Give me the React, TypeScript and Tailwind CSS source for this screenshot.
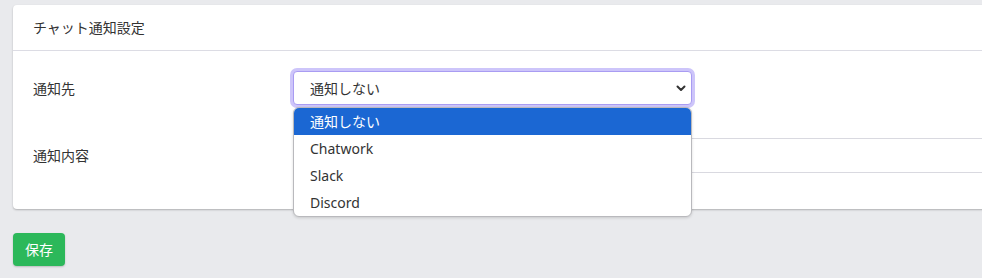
import React from "react";

export default function App() {
  const options = ["通知しない", "Chatwork", "Slack", "Discord"];
  return (
    <div
      className="w-full h-[278px] overflow-hidden bg-[#e9eaed] pl-[13px] pt-[5px] text-[14px] text-[#333333]"
      style={{ fontFamily: '"Noto Sans", "Noto Sans CJK JP", sans-serif' }}
    >
      <div className="w-[1100px] bg-white rounded-[4px] shadow-[0_1px_2px_rgba(0,0,0,0.25)]">
        <div className="h-[46px] flex items-center px-5 border-b border-[#dcdce4]">
          チャット通知設定
        </div>
        <div className="px-5 pt-[20px] pb-[36px]">
          <div className="flex items-center">
            <div className="w-[260px]">通知先</div>
            <div className="relative w-[399px]">
              <div className="h-[34px] flex items-center justify-between pl-[16px] pr-[4px] bg-white border border-[#a99cf2] rounded-[4px] shadow-[0_0_0_3px_#cdc5fa]">
                <span>通知しない</span>
                <svg width="10" height="8" viewBox="0 0 10 8" className="mr-[1px]">
                  <path d="M1.5 2.5 L5 6 L8.5 2.5" fill="none" stroke="#333" strokeWidth="2" strokeLinecap="round" strokeLinejoin="round" />
                </svg>
              </div>
              <div className="absolute left-0 top-[36px] w-[399px] z-10 bg-white border border-[#b9b9bd] rounded-[6px] overflow-hidden shadow-[0_1px_3px_rgba(0,0,0,0.15)]">
                {options.map((o, i) => (
                  <div
                    key={o}
                    className={
                      i === 0
                        ? "h-[27px] flex items-center pl-[16px] bg-[#1b67d3] text-white"
                        : "h-[27px] flex items-center pl-[16px] text-[#333333]"
                    }
                  >
                    {o}
                  </div>
                ))}
              </div>
            </div>
          </div>
          <div className="flex items-center mt-[33px]">
            <div className="w-[260px]">通知内容</div>
            <div className="flex-1 h-[35px] border border-[#d9d9e0] rounded-[4px]" />
          </div>
        </div>
      </div>
      <div className="mt-[24px]">
        <button className="w-[52px] h-[33px] rounded-[4px] bg-[#2cb85a] text-white text-[14px] shadow-[0_1px_2px_rgba(0,0,0,0.2)]">
          保存
        </button>
      </div>
    </div>
  );
}
